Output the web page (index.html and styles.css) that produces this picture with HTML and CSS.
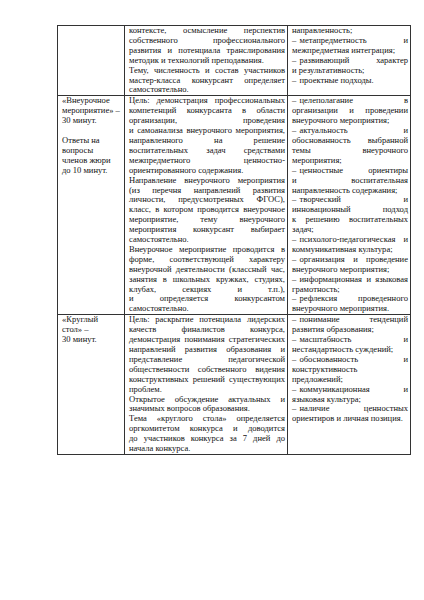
FILE: index.html
```html
<!DOCTYPE html>
<html lang="ru">
<head>
<meta charset="utf-8">
<title>Регламент конкурсных испытаний</title>
<link rel="stylesheet" href="styles.css">
</head>
<body>
<div class="page">
<table class="grid">
<colgroup><col class="c1"><col class="c2"><col class="c3"></colgroup>
<tr>
<td></td>
<td>
<div class="j">контексте, осмысление перспектив</div>
<div class="j">собственного профессионального</div>
<div class="j">развития и потенциала транслирования</div>
<div class="l">методик и технологий преподавания.</div>
<div class="j">Тему, численность и состав участников</div>
<div class="j">мастер-класса конкурсант определяет</div>
<div class="l">самостоятельно.</div>
</td>
<td>
<div class="l">направленность;</div>
<div class="j"><span class="d">–</span>метапредметность и</div>
<div class="l">межпредметная интеграция;</div>
<div class="j"><span class="d">–</span>развивающий характер</div>
<div class="l">и результативность;</div>
<div class="l"><span class="d">–</span>проектные подходы.</div>
</td>
</tr>
<tr>
<td>
<div class="l">«Внеурочное</div>
<div class="l">мероприятие» –</div>
<div class="l">30 минут.</div>
<div class="gap"></div>
<div class="l">Ответы на</div>
<div class="l">вопросы</div>
<div class="l">членов жюри</div>
<div class="l">до 10 минут.</div>
</td>
<td>
<div class="j">Цель: демонстрация профессиональных</div>
<div class="j">компетенций конкурсанта в области</div>
<div class="j">организации, проведения</div>
<div class="j">и самоанализа внеурочного мероприятия,</div>
<div class="j">направленного на решение</div>
<div class="j">воспитательных задач средствами</div>
<div class="j">межпредметного ценностно-</div>
<div class="l">ориентированного содержания.</div>
<div class="j">Направление внеурочного мероприятия</div>
<div class="j">(из перечня направлений развития</div>
<div class="j">личности, предусмотренных ФГОС),</div>
<div class="j">класс, в котором проводится внеурочное</div>
<div class="j">мероприятие, тему внеурочного</div>
<div class="j">мероприятия конкурсант выбирает</div>
<div class="l">самостоятельно.</div>
<div class="j">Внеурочное мероприятие проводится в</div>
<div class="j">форме, соответствующей характеру</div>
<div class="j">внеурочной деятельности (классный час,</div>
<div class="j">занятия в школьных кружках, студиях,</div>
<div class="j">клубах, секциях и т.п.),</div>
<div class="j">и определяется конкурсантом</div>
<div class="l">самостоятельно.</div>
</td>
<td>
<div class="j"><span class="d">–</span>целеполагание в</div>
<div class="j">организации и проведении</div>
<div class="l">внеурочного мероприятия;</div>
<div class="j"><span class="d">–</span>актуальность и</div>
<div class="j">обоснованность выбранной</div>
<div class="j">темы внеурочного</div>
<div class="l">мероприятия;</div>
<div class="j"><span class="d">–</span>ценностные ориентиры</div>
<div class="j">и воспитательная</div>
<div class="l">направленность содержания;</div>
<div class="j"><span class="d">–</span>творческий и</div>
<div class="j">инновационный подход</div>
<div class="j">к решению воспитательных</div>
<div class="l">задач;</div>
<div class="j"><span class="d">–</span>психолого-педагогическая и</div>
<div class="l">коммуникативная культура;</div>
<div class="j"><span class="d">–</span>организация и проведение</div>
<div class="l">внеурочного мероприятия;</div>
<div class="j"><span class="d">–</span>информационная и языковая</div>
<div class="l">грамотность;</div>
<div class="j"><span class="d">–</span>рефлексия проведенного</div>
<div class="l">внеурочного мероприятия.</div>
</td>
</tr>
<tr>
<td>
<div class="l">«Круглый</div>
<div class="l">стол» –</div>
<div class="l">30 минут.</div>
</td>
<td>
<div class="j">Цель: раскрытие потенциала лидерских</div>
<div class="j">качеств финалистов конкурса,</div>
<div class="j">демонстрация понимания стратегических</div>
<div class="j">направлений развития образования и</div>
<div class="j">представление педагогической</div>
<div class="j">общественности собственного видения</div>
<div class="j">конструктивных решений существующих</div>
<div class="l">проблем.</div>
<div class="j">Открытое обсуждение актуальных и</div>
<div class="l">значимых вопросов образования.</div>
<div class="j">Тема «круглого стола» определяется</div>
<div class="j">оргкомитетом конкурса и доводится</div>
<div class="j">до участников конкурса за 7 дней до</div>
<div class="l">начала конкурса.</div>
</td>
<td>
<div class="j"><span class="d">–</span>понимание тенденций</div>
<div class="l">развития образования;</div>
<div class="j"><span class="d">–</span>масштабность и</div>
<div class="l">нестандартность суждений;</div>
<div class="j"><span class="d">–</span>обоснованность и</div>
<div class="l">конструктивность</div>
<div class="l">предложений;</div>
<div class="j"><span class="d">–</span>коммуникационная и</div>
<div class="l">языковая культура;</div>
<div class="j"><span class="d">–</span>наличие ценностных</div>
<div class="l">ориентиров и личная позиция.</div>
</td>
</tr>
</table>
</div>
</body>
</html>
```

FILE: styles.css
```css
html, body {
  margin: 0;
  padding: 0;
  background: #ffffff;
}

body {
  width: 424px;
  height: 600px;
  overflow: hidden;
}

.page {
  padding: 25px 0 0 57px;
  font-family: "Liberation Serif", "Times New Roman", serif;
  font-size: 8.55px;
  line-height: 9.9px;
  color: #111111;
}

.grid {
  border-collapse: collapse;
  table-layout: fixed;
  width: 353px;
}

.c1 { width: 67px; }
.c2 { width: 163px; }
.c3 { width: 123px; }

.grid td {
  border: 1px solid #333333;
  vertical-align: top;
  padding: 0 2px 0 4px;
}

.j {
  text-align: justify;
  text-align-last: justify;
}

.l {
  text-align: left;
  white-space: nowrap;
}

.d {
  display: inline-block;
  width: 7.5px;
  text-align: left;
}

.gap {
  height: 9.9px;
}
```
